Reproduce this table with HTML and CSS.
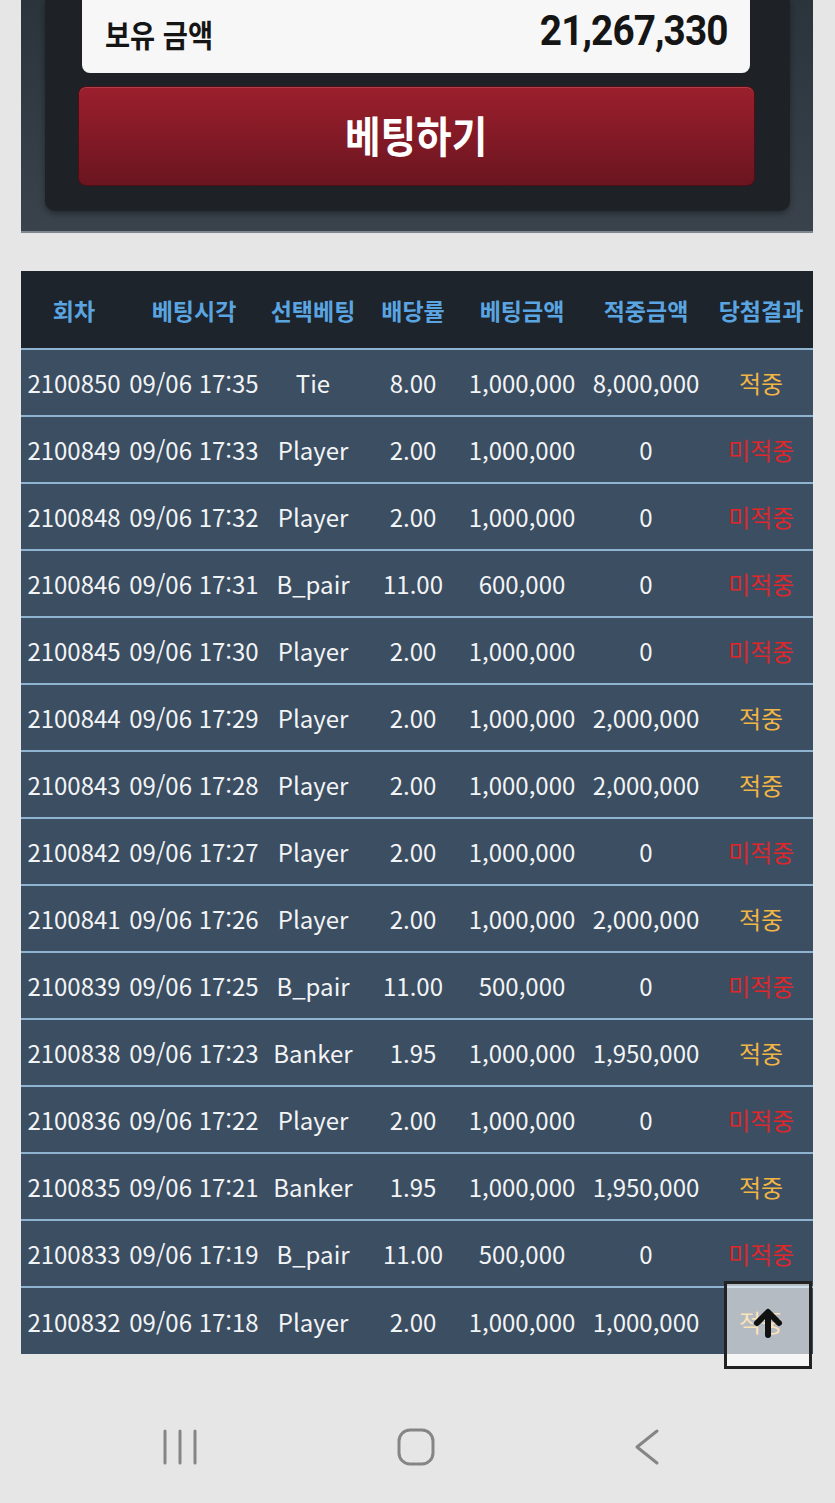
FILE: index.html
```html
<!DOCTYPE html>
<html lang="ko">

<head>
    <meta charset="UTF-8">
    <meta name="viewport" content="width=device-width, initial-scale=1.0">
    <title>베팅내역</title>
    <link rel="stylesheet" href="styles.css">
</head>

<body>
    <div class="top-panel">
        <div class="card">
            <div class="balance">
                <span class="balance-label">보유 금액</span>
                <span class="balance-value">21,267,330</span>
            </div>
            <button class="bet-button"><span>베팅하기</span></button>
        </div>
    </div>

    <table class="history">
        <colgroup>
            <col style="width: 106px">
            <col style="width: 134px">
            <col style="width: 104px">
            <col style="width: 96px">
            <col style="width: 122px">
            <col style="width: 126px">
            <col style="width: 104px">
        </colgroup>
        <thead>
            <tr>
                <th>회차</th>
                <th>베팅시각</th>
                <th>선택베팅</th>
                <th>배당률</th>
                <th>베팅금액</th>
                <th>적중금액</th>
                <th>당첨결과</th>
            </tr>
        </thead>
        <tbody>
            <tr><td>2100850</td><td>09/06 17:35</td><td>Tie</td><td>8.00</td><td>1,000,000</td><td>8,000,000</td><td class="win">적중</td></tr>
            <tr><td>2100849</td><td>09/06 17:33</td><td>Player</td><td>2.00</td><td>1,000,000</td><td>0</td><td class="lose">미적중</td></tr>
            <tr><td>2100848</td><td>09/06 17:32</td><td>Player</td><td>2.00</td><td>1,000,000</td><td>0</td><td class="lose">미적중</td></tr>
            <tr><td>2100846</td><td>09/06 17:31</td><td>B_pair</td><td>11.00</td><td>600,000</td><td>0</td><td class="lose">미적중</td></tr>
            <tr><td>2100845</td><td>09/06 17:30</td><td>Player</td><td>2.00</td><td>1,000,000</td><td>0</td><td class="lose">미적중</td></tr>
            <tr><td>2100844</td><td>09/06 17:29</td><td>Player</td><td>2.00</td><td>1,000,000</td><td>2,000,000</td><td class="win">적중</td></tr>
            <tr><td>2100843</td><td>09/06 17:28</td><td>Player</td><td>2.00</td><td>1,000,000</td><td>2,000,000</td><td class="win">적중</td></tr>
            <tr><td>2100842</td><td>09/06 17:27</td><td>Player</td><td>2.00</td><td>1,000,000</td><td>0</td><td class="lose">미적중</td></tr>
            <tr><td>2100841</td><td>09/06 17:26</td><td>Player</td><td>2.00</td><td>1,000,000</td><td>2,000,000</td><td class="win">적중</td></tr>
            <tr><td>2100839</td><td>09/06 17:25</td><td>B_pair</td><td>11.00</td><td>500,000</td><td>0</td><td class="lose">미적중</td></tr>
            <tr><td>2100838</td><td>09/06 17:23</td><td>Banker</td><td>1.95</td><td>1,000,000</td><td>1,950,000</td><td class="win">적중</td></tr>
            <tr><td>2100836</td><td>09/06 17:22</td><td>Player</td><td>2.00</td><td>1,000,000</td><td>0</td><td class="lose">미적중</td></tr>
            <tr><td>2100835</td><td>09/06 17:21</td><td>Banker</td><td>1.95</td><td>1,000,000</td><td>1,950,000</td><td class="win">적중</td></tr>
            <tr><td>2100833</td><td>09/06 17:19</td><td>B_pair</td><td>11.00</td><td>500,000</td><td>0</td><td class="lose">미적중</td></tr>
            <tr><td>2100832</td><td>09/06 17:18</td><td>Player</td><td>2.00</td><td>1,000,000</td><td>1,000,000</td><td class="win">적중</td></tr>
        </tbody>
    </table>

    <div class="nav-bar">
        <svg width="36" height="38" viewBox="0 0 36 38">
            <g stroke="#858585" stroke-width="3" stroke-linecap="round">
                <line x1="3" y1="3" x2="3" y2="35" />
                <line x1="18" y1="3" x2="18" y2="35" />
                <line x1="33" y1="3" x2="33" y2="35" />
            </g>
        </svg>
        <svg width="38" height="38" viewBox="0 0 38 38">
            <rect x="2" y="2" width="34" height="34" rx="11" fill="none" stroke="#858585" stroke-width="3" />
        </svg>
        <svg width="26" height="38" viewBox="0 0 26 38">
            <polyline points="23,3 3,19 23,35" fill="none" stroke="#858585" stroke-width="3" stroke-linecap="round" stroke-linejoin="round" />
        </svg>
    </div>

    <button class="to-top" aria-label="맨 위로">
        <svg width="32" height="32" viewBox="0 0 32 32">
            <path d="M16 29 V7 M5 17 L16 6 L27 17" fill="none" stroke="#111" stroke-width="6" stroke-linecap="round" stroke-linejoin="round" />
        </svg>
    </button>
</body>

</html>
```

FILE: styles.css
```css
body {
    margin: 0;
    background-color: #e6e6e6;
    font-family: "Noto Sans CJK KR", "Noto Sans", sans-serif;
}

.top-panel {
    margin: 0 22px 0 21px;
    height: 231px;
    background: linear-gradient(#2b333b, #3a434c);
    border-bottom: 2px solid #7d8791;
}

.card {
    margin: 0 23px 0 24px;
    height: 211px;
    background-color: #1e2125;
    border-radius: 0 0 10px 10px;
    box-shadow: 0 3px 6px rgba(0, 0, 0, 0.35);
    padding: 0 35px 0 33px;
    box-sizing: border-box;
}

.balance {
    margin: 0 5px 0 4px;
    height: 73px;
    background-color: #f7f7f7;
    border-radius: 0 0 8px 8px;
    display: flex;
    justify-content: space-between;
    align-items: center;
    padding: 0 22px 0 23px;
    color: #151515;
}

.balance-label {
    font-size: 31px;
    font-weight: bold;
    display: inline-block;
    transform: scaleX(0.88);
    transform-origin: left center;
    margin-top: -6px;
}

.balance-value {
    font-family: "Roboto", sans-serif;
    font-size: 43px;
    font-weight: bold;
    display: inline-block;
    transform: scaleX(0.9);
    transform-origin: right center;
    margin-top: -14px;
    letter-spacing: -1px;
}

.bet-button {
    display: flex;
    justify-content: center;
    align-items: center;
    width: 100%;
    height: 100px;
    margin-top: 13px;
    background: linear-gradient(#9b1f2c, #6a1520);
    border: 1px solid #4d0e16;
    border-radius: 8px;
    color: white;
    font-family: inherit;
    font-size: 43px;
    font-weight: bold;
    box-shadow: inset 0 1px 0 rgba(255, 255, 255, 0.15);
}

.bet-button span {
    display: inline-block;
    transform: scaleX(0.9);
    margin-top: -4px;
}

.history {
    margin: 38px 22px 0 21px;
    width: 792px;
    border-collapse: collapse;
    table-layout: fixed;
}

.history th {
    height: 77px;
    padding: 0;
    background-color: #1d242b;
    color: #5ba4e2;
    font-size: 23px;
    font-weight: bold;
    text-align: center;
    white-space: nowrap;
    border-bottom: 2px solid #8fb4d2;
}

.history td {
    height: 65px;
    padding: 0;
    background-color: #3c4e62;
    color: #f2f4f6;
    font-size: 24px;
    text-align: center;
    white-space: nowrap;
    border-bottom: 2px solid #8fb4d2;
}

.history tr:last-child td {
    border-bottom: none;
    height: 66px;
}

.history td.win {
    color: #f1b545;
}

.history td.lose {
    color: #e0262a;
}

.nav-bar {
    display: flex;
    justify-content: space-between;
    align-items: center;
    padding: 74px 175px 0 162px;
}

.to-top {
    position: fixed;
    right: 23px;
    bottom: 134px;
    width: 88px;
    height: 88px;
    border: 3px solid #222;
    background-color: rgba(255, 255, 255, 0.62);
    display: flex;
    justify-content: center;
    align-items: center;
    padding: 0 0 6px 0;
}
```
